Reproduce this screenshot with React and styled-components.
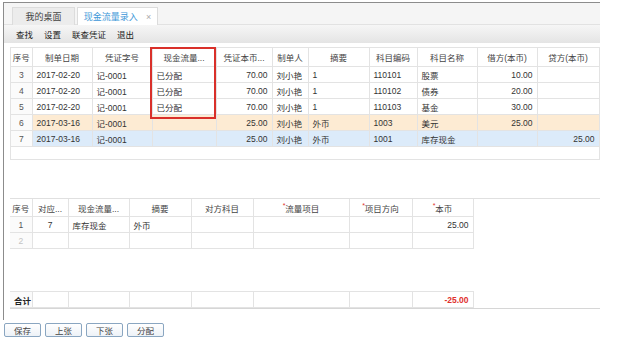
import React from "react"
import styled, { createGlobalStyle } from "styled-components"

const GlobalStyle = createGlobalStyle`
    html, body {
        margin: 0;
        padding: 0;
        background: #ffffff;
    }
    body {
        font-family: "Liberation Sans", "Noto Sans CJK SC", sans-serif;
        color: #333333;
    }
`

// styled-component
const Page = styled.div`
    width: 623px;
    height: 338px;
    overflow: hidden;
`

const Frame = styled.div`
    margin: 2px 0 0 3px;
    width: 597px;
    height: 318px;
    border-left: 1px solid #8c8c8c;
    border-top: 1px solid #8c8c8c;
    box-sizing: border-box;
    display: flex;
    flex-direction: column;
`

const TabBar = styled.div`
    height: 21px;
    background: #f5f5f5;
    display: flex;
    align-items: flex-end;
    padding-left: 8px;
    gap: 2px;
    border-bottom: 1px solid #e2e2e2;
`

const Tab = styled.div`
    height: 18px;
    width: ${(p) => p.$w}px;
    box-sizing: border-box;
    display: flex;
    align-items: center;
    justify-content: center;
    gap: 8px;
    font-size: 9px;
    border: 1px solid #dcdcdc;
    border-bottom: none;
    background: ${(p) => (p.$active ? "#ffffff" : "#ececec")};
    color: ${(p) => (p.$active ? "#3d97d8" : "#444444")};
    margin-bottom: -1px;
`

const Close = styled.span`
    color: #aaaaaa;
    font-size: 9px;
`

const Toolbar = styled.div`
    height: 18px;
    background: linear-gradient(#f6f6f6, #e4e4e4);
    display: flex;
    align-items: center;
    padding-left: 12px;
    gap: 11px;
    font-size: 8.5px;
    color: #222222;
`

const Body = styled.div`
    padding: 4px 0 0 6px;
    display: flex;
    flex-direction: column;
`

const GridBox = styled.div`
    position: relative;
    width: 590px;
    height: 113px;
    box-sizing: border-box;
    border: 1px solid #e3e3e3;
`

const Table = styled.table`
    border-collapse: collapse;
    table-layout: fixed;
    width: ${(p) => p.$w}px;
    font-size: 8.5px;

    & th {
        font-weight: normal;
        color: #444444;
        height: ${(p) => p.$headH}px;
        border: 1px solid #e3e3e3;
        border-top: none;
        padding: 0 1px;
        white-space: nowrap;
        overflow: hidden;
    }

    & td {
        height: 15px;
        border: 1px solid #e3e3e3;
        padding: 0 4px;
        white-space: nowrap;
        overflow: hidden;
    }

    & tr > *:first-child {
        border-left: none;
    }
`

const Row = styled.tr`
    background: ${(p) =>
        p.$tone === "orange" ? "#fdebd3" : p.$tone === "blue" ? "#dcebfa" : "#ffffff"};
`

const NoCell = styled.td`
    text-align: center;
    color: ${(p) => (p.$muted ? "#c4c4c4" : "#555555")};
    background: #fbfbfb;
`

const Num = styled.td`
    text-align: right;
    color: ${(p) => (p.$red ? "#e0302c" : "#333333")};
    font-weight: ${(p) => (p.$red ? "bold" : "normal")};
`

const Center = styled.td`
    text-align: center;
`

const Req = styled.span`
    color: #e0302c;
    font-size: 7px;
    vertical-align: top;
`

const RedMark = styled.div`
    position: absolute;
    left: 139px;
    top: -1px;
    width: 66px;
    height: 72px;
    box-sizing: border-box;
    border: 2px solid #d9302a;
    pointer-events: none;
`

const LowerPanel = styled.div`
    margin-top: 38px;
    width: 590px;
    height: 111px;
    box-sizing: border-box;
    border-top: 1px solid #e0e0e0;
    border-bottom: 1px solid #d6d6d6;
    display: flex;
    flex-direction: column;
    justify-content: space-between;
`

const TotalLabel = styled.td`
    font-weight: bold;
    color: #222222;
    background: #fbfbfb;
`

const ButtonRow = styled.div`
    display: flex;
    gap: 4px;
    padding: 3px 0 0 4px;
`

const Button = styled.button`
    width: 37px;
    height: 14px;
    padding: 0;
    font-family: "Liberation Sans", "Noto Sans CJK SC", sans-serif;
    font-size: 8.5px;
    color: #444444;
    border: 1px solid #8aa6c1;
    border-radius: 2px;
    background: linear-gradient(#ffffff, #edf2f7);
    display: flex;
    align-items: center;
    justify-content: center;
`

const topCols = [21, 60, 60, 64, 56, 36, 61, 48, 60, 60, 62]
const topHead = [
    "序号",
    "制单日期",
    "凭证字号",
    "现金流量...",
    "凭证本币...",
    "制单人",
    "摘要",
    "科目编码",
    "科目名称",
    "借方(本币)",
    "贷方(本币)",
]

const vouchers = [
    { no: 3, date: "2017-02-20", code: "记-0001", flow: "已分配", amt: "70.00", memo: "1", acct: "110101", name: "股票", debit: "10.00", credit: "" },
    { no: 4, date: "2017-02-20", code: "记-0001", flow: "已分配", amt: "70.00", memo: "1", acct: "110102", name: "债券", debit: "20.00", credit: "" },
    { no: 5, date: "2017-02-20", code: "记-0001", flow: "已分配", amt: "70.00", memo: "1", acct: "110103", name: "基金", debit: "30.00", credit: "" },
    { no: 6, date: "2017-03-16", code: "记-0001", flow: "", amt: "25.00", memo: "外币", acct: "1003", name: "美元", debit: "25.00", credit: "", tone: "orange" },
    { no: 7, date: "2017-03-16", code: "记-0001", flow: "", amt: "25.00", memo: "外币", acct: "1001", name: "库存现金", debit: "", credit: "25.00", tone: "blue" },
]

const lowCols = [22, 36, 61, 62, 62, 96, 63, 61]

function Cols({ widths }) {
    return (
        <colgroup>
            {widths.map((w, i) => (
                <col key={i} style={{ width: w }} />
            ))}
        </colgroup>
    )
}

export default function App() {
    return (
        <Page>
            <GlobalStyle />
            <Frame>
                {/* 标签页 */}
                <TabBar>
                    <Tab $w={63}>我的桌面</Tab>
                    <Tab $w={81} $active>
                        现金流量录入<Close>×</Close>
                    </Tab>
                </TabBar>

                {/* 工具栏 */}
                <Toolbar>
                    <span>查找</span>
                    <span>设置</span>
                    <span>联查凭证</span>
                    <span>退出</span>
                </Toolbar>

                <Body>
                    {/* 凭证列表 */}
                    <GridBox>
                        <Table $w={588} $headH={18}>
                            <Cols widths={topCols} />
                            <thead>
                                <tr>
                                    {topHead.map((h) => (
                                        <th key={h}>{h}</th>
                                    ))}
                                </tr>
                            </thead>
                            <tbody>
                                {vouchers.map((v) => (
                                    <Row key={v.no} $tone={v.tone}>
                                        <NoCell>{v.no}</NoCell>
                                        <td>{v.date}</td>
                                        <td>{v.code}</td>
                                        <td>{v.flow}</td>
                                        <Num>{v.amt}</Num>
                                        <td>刘小艳</td>
                                        <td>{v.memo}</td>
                                        <td>{v.acct}</td>
                                        <td>{v.name}</td>
                                        <Num>{v.debit}</Num>
                                        <Num>{v.credit}</Num>
                                    </Row>
                                ))}
                            </tbody>
                        </Table>
                        <RedMark />
                    </GridBox>

                    {/* 流量分配 */}
                    <LowerPanel>
                        <Table $w={463} $headH={17}>
                            <Cols widths={lowCols} />
                            <thead>
                                <tr>
                                    <th>序号</th>
                                    <th>对应...</th>
                                    <th>现金流量...</th>
                                    <th>摘要</th>
                                    <th>对方科目</th>
                                    <th>
                                        <Req>*</Req>流量项目
                                    </th>
                                    <th>
                                        <Req>*</Req>项目方向
                                    </th>
                                    <th>
                                        <Req>*</Req>本币
                                    </th>
                                </tr>
                            </thead>
                            <tbody>
                                <Row>
                                    <NoCell>1</NoCell>
                                    <Center>7</Center>
                                    <td>库存现金</td>
                                    <td>外币</td>
                                    <td />
                                    <td />
                                    <td />
                                    <Num>25.00</Num>
                                </Row>
                                <Row>
                                    <NoCell $muted>2</NoCell>
                                    <td />
                                    <td />
                                    <td />
                                    <td />
                                    <td />
                                    <td />
                                    <td />
                                </Row>
                            </tbody>
                        </Table>

                        <Table $w={463} $headH={17}>
                            <Cols widths={lowCols} />
                            <tbody>
                                <Row>
                                    <TotalLabel>合计</TotalLabel>
                                    <td />
                                    <td />
                                    <td />
                                    <td />
                                    <td />
                                    <td />
                                    <Num $red>-25.00</Num>
                                </Row>
                            </tbody>
                        </Table>
                    </LowerPanel>
                </Body>
            </Frame>

            <ButtonRow>
                <Button>保存</Button>
                <Button>上张</Button>
                <Button>下张</Button>
                <Button>分配</Button>
            </ButtonRow>
        </Page>
    )
}
